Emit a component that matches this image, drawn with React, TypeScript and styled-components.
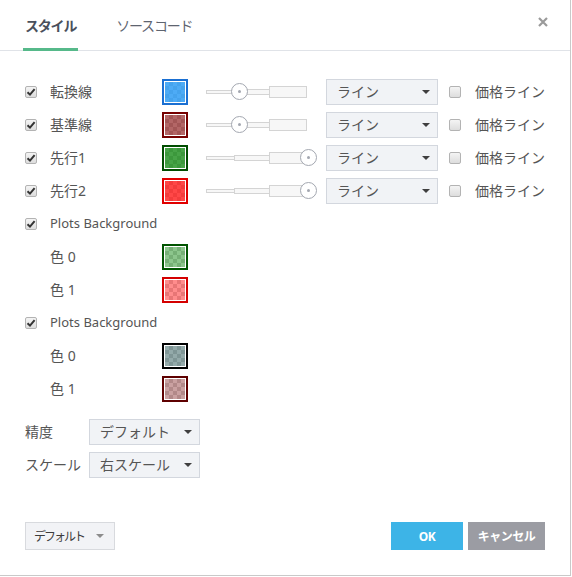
import React, { FC } from 'react';
import styled, { createGlobalStyle } from 'styled-components';

const GlobalStyle = createGlobalStyle`
    body {
        margin: 0;
        background: #ffffff;
        font-family: "Noto Sans", "Noto Sans CJK JP", sans-serif;
        color: #555555;
    }
`;

const Dialog = styled.div`
    width: 570px;
    height: 575px;
    border-right: 1px solid #c9c9c9;
    border-bottom: 1px solid #c9c9c9;
    display: flex;
    flex-direction: column;
    background: #ffffff;
`;

const Header = styled.div`
    height: 50px;
    border-bottom: 1px solid #e0e3e8;
    display: flex;
    align-items: stretch;
    padding-left: 23px;
    padding-right: 22px;
`;

const Tab = styled.div<{ $active?: boolean }>`
    display: flex;
    align-items: center;
    padding: 0 2px;
    margin-right: 36px;
    font-size: 14px;
    letter-spacing: -1.2px;
    font-weight: ${(p) => (p.$active ? 700 : 400)};
    color: ${(p) => (p.$active ? '#4a505c' : '#5e6470')};
    border-bottom: 3px solid ${(p) => (p.$active ? '#56b98a' : 'transparent')};
    margin-bottom: -1px;
    padding-top: 1px;
`;

const Close = styled.div`
    margin-left: auto;
    display: flex;
    align-items: center;
    padding-bottom: 6px;
`;

const Body = styled.div`
    flex: 1;
    padding: 24px 0 0 25px;
    display: flex;
    flex-direction: column;
`;

const Row = styled.div<{ $indent?: boolean }>`
    height: 33px;
    display: flex;
    align-items: center;
    padding-left: ${(p) => (p.$indent ? '25px' : '0')};
    font-size: 14px;
`;

const Label = styled.div<{ $width: number; $small?: boolean }>`
    width: ${(p) => p.$width}px;
    white-space: nowrap;
    line-height: 1;
    font-size: ${(p) => (p.$small ? '13px' : '14px')};
`;

const Box = styled.span`
    width: 12px;
    height: 12px;
    box-sizing: border-box;
    border: 1px solid #b3b3b3;
    border-radius: 2px;
    background: linear-gradient(#f4f4f4, #dddddd);
    display: flex;
    align-items: center;
    justify-content: center;
    flex-shrink: 0;
`;

const Check: FC<{ checked?: boolean; gap?: number }> = ({ checked, gap = 13 }) => (
    <Box style={{ marginRight: gap }}>
        {checked && (
            <svg width="10" height="10" viewBox="0 0 10 10">
                <path d="M1.5 5.2 L4 7.6 L8.6 2.2" stroke="#333" strokeWidth="2" fill="none" />
            </svg>
        )}
    </Box>
);

const Swatch = styled.span<{ $border: string; $fill: string }>`
    width: 26px;
    height: 26px;
    box-sizing: border-box;
    border: 2px solid ${(p) => p.$border};
    padding: 1px;
    background: #fff;
    flex-shrink: 0;
    &::after {
        content: '';
        display: block;
        width: 100%;
        height: 100%;
        background:
            linear-gradient(${(p) => p.$fill}, ${(p) => p.$fill}),
            repeating-conic-gradient(#d6d6d6 0 25%, #ffffff 0 50%) 0 0 / 8px 8px;
    }
`;

const SliderWrap = styled.div`
    position: relative;
    width: 110px;
    height: 17px;
    margin-left: 19px;
    display: flex;
    align-items: center;
`;

const Segment = styled.div<{ $w: number; $h: number }>`
    width: ${(p) => p.$w}px;
    height: ${(p) => p.$h}px;
    box-sizing: border-box;
    background: #f7f7f7;
    border: 1px solid #d4d4d4;
    margin-left: -1px;
`;

const Knob = styled.div`
    position: absolute;
    top: 0;
    width: 17px;
    height: 17px;
    box-sizing: border-box;
    border-radius: 50%;
    border: 1px solid #a3a7b0;
    background: #ffffff;
    display: flex;
    align-items: center;
    justify-content: center;
    &::after {
        content: '';
        width: 3px;
        height: 3px;
        border-radius: 50%;
        background: #a3a7b0;
    }
`;

const Slider: FC<{ value: number }> = ({ value }) => (
    <SliderWrap>
        <Segment $w={29} $h={4} />
        <Segment $w={36} $h={6} />
        <Segment $w={38} $h={12} />
        <Knob style={{ left: 24 + value * 69 }} />
    </SliderWrap>
);

const SelectBox = styled.div<{ $w: number }>`
    width: ${(p) => p.$w}px;
    height: 26px;
    box-sizing: border-box;
    background: #f1f3f6;
    border: 1px solid #d3d7de;
    display: flex;
    align-items: center;
    padding: 0 7px 0 10px;
    font-size: 14px;
    line-height: 1;
    white-space: nowrap;
    flex-shrink: 0;
`;

const Caret = styled.span<{ $color?: string; $gap?: number }>`
    margin-left: ${(p) => (p.$gap ? `${p.$gap}px` : 'auto')};
    width: 0;
    height: 0;
    border-left: 4px solid transparent;
    border-right: 4px solid transparent;
    border-top: 4px solid ${(p) => p.$color || '#3f3f3f'};
`;

const Select: FC<{ text: string; width: number; style?: React.CSSProperties }> = ({ text, width, style }) => (
    <SelectBox $w={width} style={style}>
        {text}
        <Caret />
    </SelectBox>
);

const PlotRow: FC<{ label: string; border: string; fill: string; slider: number }> = (props) => (
    <Row>
        <Check checked />
        <Label $width={112}>{props.label}</Label>
        <Swatch $border={props.border} $fill={props.fill} />
        <Slider value={props.slider} />
        <Select text="ライン" width={112} style={{ marginLeft: 9 }} />
        <Box style={{ marginLeft: 11, marginRight: 14 }} />
        <Label $width={80}>価格ライン</Label>
    </Row>
);

const ColorRow: FC<{ label: string; border: string; fill: string }> = (props) => (
    <Row $indent>
        <Label $width={112}>{props.label}</Label>
        <Swatch $border={props.border} $fill={props.fill} />
    </Row>
);

const Settings = styled.div`
    margin-top: 10px;
    display: flex;
    flex-direction: column;
`;

const Footer = styled.div`
    display: flex;
    align-items: center;
    padding: 0 25px 25px 25px;
    gap: 5px;
`;

const DefaultButton = styled.div`
    width: 90px;
    height: 28px;
    box-sizing: border-box;
    background: #f2f3f6;
    border: 1px solid #d8dade;
    display: flex;
    align-items: center;
    padding: 0 0 0 8px;
    font-size: 12px;
    letter-spacing: -2px;
    white-space: nowrap;
    color: #3c3c3c;
    margin-right: auto;
`;

const ActionButton = styled.div<{ $bg: string; $w: number }>`
    width: ${(p) => p.$w}px;
    height: 28px;
    background: ${(p) => p.$bg};
    color: #ffffff;
    font-weight: 700;
    font-size: 12px;
    letter-spacing: -0.5px;
    display: flex;
    align-items: center;
    justify-content: center;
`;

const plots = [
    { label: '転換線', border: '#1a6fd2', fill: 'rgba(33,150,243,0.8)', slider: 0 },
    { label: '基準線', border: '#760000', fill: 'rgba(128,0,0,0.6)', slider: 0 },
    { label: '先行1', border: '#004d00', fill: 'rgba(0,128,0,0.72)', slider: 1 },
    { label: '先行2', border: '#e00000', fill: 'rgba(255,0,0,0.72)', slider: 1 },
];

const backgrounds = [
    [
        { label: '色 0', border: '#005400', fill: 'rgba(0,128,0,0.45)' },
        { label: '色 1', border: '#d40000', fill: 'rgba(255,0,0,0.45)' },
    ],
    [
        { label: '色 0', border: '#000000', fill: 'rgba(40,85,85,0.5)' },
        { label: '色 1', border: '#5e0000', fill: 'rgba(128,30,30,0.42)' },
    ],
];

const App: FC = () => (
    <>
        <GlobalStyle />
        <Dialog>
            <Header>
                <Tab $active>スタイル</Tab>
                <Tab>ソースコード</Tab>
                <Close>
                    <svg width="10" height="10" viewBox="0 0 10 10">
                        <path d="M1 1 L9 9 M9 1 L1 9" stroke="#9a9a9a" strokeWidth="2.2" />
                    </svg>
                </Close>
            </Header>
            <Body>
                {plots.map((p) => (
                    <PlotRow key={p.label} {...p} />
                ))}
                {backgrounds.map((group, i) => (
                    <React.Fragment key={i}>
                        <Row>
                            <Check checked />
                            <Label $width={200} $small>Plots Background</Label>
                        </Row>
                        {group.map((c) => (
                            <ColorRow key={c.label} {...c} />
                        ))}
                    </React.Fragment>
                ))}
                <Settings>
                    <Row>
                        <Label $width={64}>精度</Label>
                        <Select text="デフォルト" width={111} />
                    </Row>
                    <Row>
                        <Label $width={64}>スケール</Label>
                        <Select text="右スケール" width={111} />
                    </Row>
                </Settings>
            </Body>
            <Footer>
                <DefaultButton>
                    デフォルト
                    <Caret $color="#8c8c8c" $gap={12} />
                </DefaultButton>
                <ActionButton $bg="#3db4e7" $w={72}>OK</ActionButton>
                <ActionButton $bg="#9b9ca3" $w={77}>キャンセル</ActionButton>
            </Footer>
        </Dialog>
    </>
);

export default App;
